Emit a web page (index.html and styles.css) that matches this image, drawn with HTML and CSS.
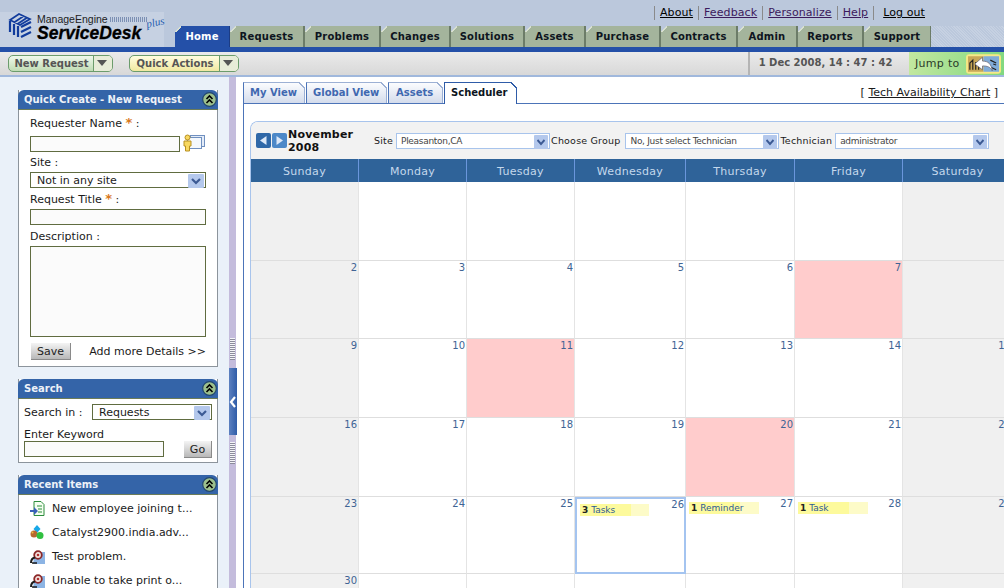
FILE: index.html
```html
<!DOCTYPE html>
<html lang="en">
<head>
<meta charset="utf-8">
<title>ServiceDesk Plus</title>
<link rel="stylesheet" href="styles.css">
</head>
<body>
<svg class="defs" width="0" height="0" aria-hidden="true">
  <defs>
    <symbol id="collapse" viewBox="0 0 15 15">
      <circle cx="7.5" cy="7.5" r="6.8" fill="#9cc08c" stroke="#24486c" stroke-width="1.2"/>
      <path d="M4.5 7l3-3 3 3M4.5 11l3-3 3 3" fill="none" stroke="#000" stroke-width="1.6"/>
    </symbol>
    <symbol id="chev" viewBox="0 0 16 14" preserveAspectRatio="none">
      <rect width="16" height="14" rx="1" fill="#b4c8ec"/>
      <path d="M4 5l4 4 4-4" fill="none" stroke="#3c5a94" stroke-width="2.2"/>
    </symbol>
    <symbol id="problem" viewBox="0 0 15 15">
      <path d="M5 3h10v12H3z" fill="#8cb4e4"/>
      <circle cx="8" cy="6" r="3.8" fill="#f4e4e0" stroke="#8c2828" stroke-width="1.800"/>
      <circle cx="8" cy="6" r="1.300" fill="#b03030"/>
      <path d="M1 14c0-3 1.500-5 4-5.500" fill="none" stroke="#1c1c1c" stroke-width="2"/>
      <path d="M2 14h5" stroke="#1c1c1c" stroke-width="1.500"/>
    </symbol>
  </defs>
</svg>

<header class="header">
  <div class="logo-slot">
    <div class="logo">
      <svg class="logo-mark" width="24" height="26" viewBox="0 0 24 26">
        <path d="M2 7l9-6 11 5-10 6zM6 9.500l9-6M9.500 11l9-6" fill="none" stroke="#123c9c" stroke-width="1.700"/>
        <path d="M2 8v11M6 11v11M10 13v11" fill="none" stroke="#123c9c" stroke-width="2.200"/>
        <path d="M13 14l10-5M13 19l10-5M13 24l10-5" fill="none" stroke="#123c9c" stroke-width="2.200"/>
      </svg>
      <div class="logo-words">
        <div class="logo-top">ManageEngine<span class="logo-dots"></span></div>
        <div class="logo-main">ServiceDesk</div>
      </div>
      <span class="logo-plus">plus</span>
    </div>
  </div>
  <div class="head-right">
    <div class="toplinks">
      <a href="#">About</a><a class="seen" href="#">Feedback</a><a class="seen" href="#">Personalize</a><a class="seen" href="#">Help</a><a class="last" href="#">Log out</a>
    </div>
    <nav class="tabs">
      <a class="tab active" href="#">Home</a>
      <a class="tab" href="#">Requests</a>
      <a class="tab" href="#">Problems</a>
      <a class="tab" href="#">Changes</a>
      <a class="tab" href="#">Solutions</a>
      <a class="tab" href="#">Assets</a>
      <a class="tab" href="#">Purchase</a>
      <a class="tab" href="#">Contracts</a>
      <a class="tab" href="#">Admin</a>
      <a class="tab" href="#">Reports</a>
      <a class="tab" href="#">Support</a>
    </nav>
  </div>
</header>

<div class="toolbar">
  <div class="tool-buttons">
    <div class="tool new"><span class="tool-label">New Request</span><span class="tool-arrow"></span></div>
    <div class="tool quick"><span class="tool-label">Quick Actions</span><span class="tool-arrow"></span></div>
  </div>
  <div class="clock">1 Dec 2008, 14 : 47 : 42</div>
  <div class="jump">
    <span>Jump to</span>
    <svg class="jump-icon" width="36" height="20" viewBox="0 0 36 20">
      <rect x=".5" y=".5" width="35" height="19" rx="2" fill="#f8e88c" stroke="#f4e880"/>
      <rect x="2" y="2" width="16" height="16" fill="#c8a858"/>
      <rect x="18" y="2" width="16" height="16" fill="#80acd8"/>
      <path d="M4 16V9l3-3v10M10 16V8M13 16v-5M25 6l6 3M28 10l3 1M25 13l6 3" stroke="#222" stroke-width="1.200" fill="none"/>
      <path d="M9 10l8-7v4c6 0 9 3 10 10-2-4-5-5-10-5v4z" fill="#fff" stroke="#667" stroke-width=".8"/>
    </svg>
  </div>
</div>

<div class="main">
  <aside class="sidebar">
    <section class="panel create">
      <h2 class="panel-head">Quick Create - New Request<svg class="collapse"><use href="#collapse"/></svg></h2>
      <div class="create-body">
        <label class="field-label">Requester Name <b class="req">*</b> :</label>
        <div class="requester-row">
          <input class="text short" type="text">
          <svg class="person" width="22" height="18" viewBox="0 0 22 18">
            <rect x="7.500" y="1.500" width="14" height="11" fill="#e4ecf8" stroke="#7090c0"/>
            <rect x="4.500" y="3.500" width="14" height="11" fill="#f4f8fc" stroke="#7090c0"/>
            <circle cx="4.500" cy="3.500" r="2.500" fill="#f8d860" stroke="#b89020"/>
            <path d="M1 7h7v5H6.500v5h-4v-5H1z" fill="#f8d860" stroke="#b89020"/>
          </svg>
        </div>
        <label class="field-label site-field">Site :</label>
        <div class="select wide">Not in any site<svg class="chev"><use href="#chev"/></svg></div>
        <label class="field-label title-field">Request Title <b class="req">*</b> :</label>
        <input class="text wide" type="text">
        <label class="field-label desc-field">Description :</label>
        <textarea class="area"></textarea>
        <div class="form-foot">
          <button class="btn save" type="button">Save</button>
          <a class="more" href="#">Add more Details &gt;&gt;</a>
        </div>
      </div>
    </section>

    <section class="panel search">
      <h2 class="panel-head">Search<svg class="collapse"><use href="#collapse"/></svg></h2>
      <div class="search-body">
        <div class="search-row">
          <span>Search in :</span>
          <div class="select scope">Requests<svg class="chev"><use href="#chev"/></svg></div>
        </div>
        <label class="kw-label">Enter Keyword</label>
        <div class="kw-row">
          <input class="text kw" type="text">
          <button class="btn go" type="button">Go</button>
        </div>
      </div>
    </section>

    <section class="panel recent">
      <h2 class="panel-head">Recent Items<svg class="collapse"><use href="#collapse"/></svg></h2>
      <ul class="recent-list">
        <li>
          <svg class="ri" viewBox="0 0 15 15"><path d="M4 .5h7l3 3v11H4z" fill="#f4fff0" stroke="#2c8c3c"/><path d="M7 5h5M8 8h4M8 11h4" stroke="#2c8c3c"/><path d="M0 9h4V6l4 4-4 4v-3H0z" fill="#3860b8"/></svg>
          New employee joining t...
        </li>
        <li>
          <svg class="ri" viewBox="0 0 15 15"><path d="M7 0l3.500 4L7 8 3.500 4z" fill="#18a8e8"/><circle cx="4" cy="9" r="3.500" fill="#b86830"/><circle cx="2.500" cy="7.500" r="1" fill="#e8c040"/><circle cx="10" cy="10.500" r="3.500" fill="#30c040"/></svg>
          Catalyst2900.india.adv...
        </li>
        <li><svg class="ri"><use href="#problem"/></svg>Test problem.</li>
        <li><svg class="ri"><use href="#problem"/></svg>Unable to take print o...</li>
      </ul>
    </section>
  </aside>

  <div class="splitter">
    <div class="grip top-grip"></div>
    <div class="handle"><svg width="8" height="14" viewBox="0 0 8 14"><path d="M6 2L2 7l4 5" fill="none" stroke="#fff" stroke-width="2.200"/></svg></div>
    <div class="grip"></div>
  </div>

  <main class="content">
    <div class="subtabs-row">
      <div class="subtabs">
        <a class="subtab" href="#">My View</a>
        <a class="subtab" href="#">Global View</a>
        <a class="subtab" href="#">Assets</a>
        <a class="subtab current" href="#">Scheduler</a>
      </div>
      <div class="chart-link">[ <a href="#">Tech Availability Chart</a> ]</div>
    </div>
    <div class="frame">
      <div class="calendar">
        <div class="cal-bar">
          <div class="nav-arrows">
            <svg width="15" height="15" viewBox="0 0 15 15"><rect width="15" height="15" rx="2" fill="#2f68a8"/><path d="M10.500 3v9L4 7.500z" fill="#dce8f8"/></svg>
            <svg width="15" height="15" viewBox="0 0 15 15"><rect width="15" height="15" rx="2" fill="#4c88c8"/><path d="M4.500 3v9L11 7.500z" fill="#dce8f8"/></svg>
          </div>
          <div class="month">November<br>2008</div>
          <span class="bar-label site-label">Site</span>
          <div class="cal-select">Pleasanton,CA<svg class="chev"><use href="#chev"/></svg></div>
          <span class="bar-label group-label">Choose Group</span>
          <div class="cal-select">No, Just select Technician<svg class="chev"><use href="#chev"/></svg></div>
          <span class="bar-label">Technician</span>
          <div class="cal-select">administrator<svg class="chev"><use href="#chev"/></svg></div>
        </div>
        <div class="cal-grid">
          <div class="dow">Sunday</div><div class="dow">Monday</div><div class="dow">Tuesday</div><div class="dow">Wednesday</div><div class="dow">Thursday</div><div class="dow">Friday</div><div class="dow">Saturday</div>

          <div class="day off"></div><div class="day"></div><div class="day"></div><div class="day"></div><div class="day"></div><div class="day"></div><div class="day off"></div>

          <div class="day off">2</div><div class="day">3</div><div class="day">4</div><div class="day">5</div><div class="day">6</div><div class="day hot">7</div><div class="day off">8</div>

          <div class="day off">9</div><div class="day">10</div><div class="day hot">11</div><div class="day">12</div><div class="day">13</div><div class="day">14</div><div class="day off">15</div>

          <div class="day off">16</div><div class="day">17</div><div class="day">18</div><div class="day">19</div><div class="day hot">20</div><div class="day">21</div><div class="day off">22</div>

          <div class="day off">23</div><div class="day">24</div><div class="day">25</div>
          <div class="day today">26<div class="event"><b>3</b> Tasks</div></div>
          <div class="day">27<div class="event"><b>1</b> Reminder</div></div>
          <div class="day">28<div class="event"><b>1</b> Task</div></div>
          <div class="day off">29</div>

          <div class="day off">30</div><div class="day"></div><div class="day"></div><div class="day"></div><div class="day"></div><div class="day"></div><div class="day off"></div>
        </div>
      </div>
    </div>
  </main>
</div>
</body>
</html>
```
FILE: styles.css
```css
* { box-sizing: border-box; }
html, body { margin: 0; padding: 0; height: 588px; overflow: hidden; }
body { font: 11px/13px "DejaVu Sans", Verdana, sans-serif; color: #1a1a1a; background: #fff; }
a { color: inherit; }
.defs { position: absolute; }

/* header */
.header { display: flex; height: 47px; background: #bbc8dc; }
.logo-slot { width: 175px; flex: none; display: flex; align-items: flex-end; }
.logo { display: flex; width: 164px; height: 35px; padding: 1px 0 0 8px; background: #c6d1e2; position: relative; }
.logo-mark { flex: none; margin-right: 5px; }
.logo-words { display: flex; flex-direction: column; }
.logo-top { display: flex; align-items: center; font: 10.500px/13px "Liberation Sans", sans-serif; color: #222; }
.logo-dots { width: 37px; height: 5px; margin-left: 2px; background: repeating-linear-gradient(90deg, #7c90b4 0 1px, transparent 1px 2px); }
.logo-main { font: italic bold 17.500px/15px "Liberation Sans", sans-serif; color: #000; -webkit-text-stroke: .3px #000; }
.logo-plus { position: absolute; left: 146px; top: 4px; font: italic 11px/12px "Liberation Serif", serif; color: #2860b0; transform: rotate(-12deg); }

.head-right { flex: 1; display: flex; flex-direction: column; background: #bbc8dc; }
.toplinks { height: 26px; display: flex; align-items: flex-start; padding: 6px 0 0 479px; color: #000; letter-spacing: .1px; }
.toplinks a { padding: 0 5px; border-left: 1px solid #8a8a8a; height: 14px; text-decoration: underline; }
.toplinks a.seen { color: #3c1a5c; }
.toplinks a.last { padding-left: 9px; color: #000; border-left-color: #8a8a8a; }

.tabs { display: grid; height: 21px; grid-template-columns: 55px 75px 76px 70px 74px 61px 75px 77px 60px 66px 67px; background: repeating-linear-gradient(45deg, #bbc8dc 0 1px, #c6d1e2 1px 2px) 755px 0 no-repeat; }
.tab { position: relative; display: block; text-align: center; font-size: 10px; letter-spacing: .2px; font-weight: bold; line-height: 20px; padding-top: 1px; text-decoration: none; color: #0e1420; background: #a4b49c; border-right: 2px solid #6c7c68; }
.tab::before { content: ""; position: absolute; left: 0; top: 0; width: 6px; height: 6px; background: linear-gradient(135deg, #bbc8dc 48%, #d8e0d0 48%, #d8e0d0 62%, transparent 62%); }
.tab.active { background: #2450a8; color: #fff; border-right: 1px solid #1c3c84; }
.tab:last-child { border-right-width: 1px; }

/* toolbar */
.toolbar { display: flex; height: 30px; border-top: 5px solid #2450a8; border-bottom: 2px solid #a0b8dc; background: linear-gradient(#eaeaea, #d8d8d8); }
.tool-buttons { width: 748px; flex: none; display: flex; gap: 16px; padding: 3px 0 0 8px; }
.tool { display: flex; height: 17px; border: 1px solid #6c9c6c; border-radius: 5px; font-size: 10px; font-weight: bold; color: #555; line-height: 16px; }
.tool.new { width: 105px; background: linear-gradient(#f0f8ec, #c0dcb4); }
.tool.quick { width: 110px; background: linear-gradient(#fffde0, #f0e8a0); }
.tool-label { flex: 1; text-align: center; padding-left: 1px; }
.tool-arrow { width: 19px; border-left: 1px solid #6c9c6c; position: relative; background: #e8ecd8; border-radius: 0 4px 4px 0; }
.tool-arrow::after { content: ""; position: absolute; left: 3px; top: 4px; border: 5px solid transparent; border-top: 6px solid #555; border-bottom: 0; }
.clock { width: 161px; flex: none; border-left: 2px solid #b4b4b4; font-size: 10px; font-weight: bold; color: #555; text-align: center; line-height: 20px; padding: 1px 8px 0 0; }
.jump { flex: 1; display: flex; align-items: center; justify-content: space-between; padding: 0 3px 0 6px; background: linear-gradient(100deg, #c4e8a0, #80d880); color: #2a3a2a; letter-spacing: .3px; }
.jump-icon { flex: none; width: 35px; }

/* layout */
.main { display: flex; height: 511px; overflow: hidden; }
.sidebar { width: 229px; flex: none; padding: 13px 11px 0 18px; background: #eaf1f9; }
.panel { background: #fff; border: 1px solid #8c949c; border-top: 0; }
.panel-head { position: relative; height: 20px; margin: 0 -1px; padding-left: 6px; font-size: 10px; line-height: 19px; font-weight: bold; color: #eef2f8; background: #3464a8; border-radius: 6px 6px 0 0; border-bottom: 1px solid #6c7c58; }
.collapse { position: absolute; right: 1px; top: 2px; width: 15px; height: 15px; }
.chev { position: absolute; right: 1px; top: 1px; width: 16px; height: 14px; }
.create { height: 277px; }
.create-body { padding: 6px 11px 0; color: #1a1a1a; }
.field-label { display: block; height: 15px; line-height: 13px; }
.site-field { line-height: 11px; }
.title-field { height: 17px; }
.desc-field { height: 16px; }
.req { color: #d87820; font-size: 13px; }
.requester-row { display: flex; gap: 3px; height: 17px; margin: 5px 0 4px; }
.person { flex: none; margin-top: -2px; }
.text { display: block; height: 16px; padding: 0; border: 1px solid #606c40; background: #fbfbfb; }
.short { width: 150px; }
.wide { width: 176px; }
.area { display: block; width: 176px; height: 91px; padding: 0; border: 1px solid #606c40; background: #fbfbfb; resize: none; }
.select { position: relative; height: 16px; padding-left: 6px; line-height: 15px; border: 1px solid #606c40; background: #fff; }
.create-body .select { margin-bottom: 4px; }
.create-body .text.wide { margin-bottom: 5px; }
.form-foot { display: flex; align-items: center; justify-content: space-between; margin-top: 6px; padding-left: 1px; }
.btn { height: 17px; padding: 0; font: 11px/13px "DejaVu Sans", sans-serif; color: #222; border: 0; border-right: 1px solid #8a8a8a; border-bottom: 1px solid #8a8a8a; background: linear-gradient(#f4f4f4, #b8b8b8); }
.save { width: 40px; }
.more { text-decoration: none; }
.search { margin-top: 12px; height: 84px; }
.search-body { padding: 5px 5px 0 5px; }
.search-row { display: flex; align-items: center; justify-content: space-between; height: 16px; }
.scope { width: 120px; }
.kw-label { display: block; margin-top: 8px; height: 13px; line-height: 14px; }
.kw-row { display: flex; justify-content: space-between; }
.kw { width: 140px; }
.go { width: 28px; }
.recent { margin-top: 12px; height: 140px; }
.recent-list { list-style: none; margin: 0; padding: 1px 0 0 11px; }
.recent-list li { display: flex; align-items: center; gap: 7px; height: 24px; }
.ri { width: 15px; height: 15px; flex: none; }

/* splitter */
.splitter { width: 7px; flex: none; background: #c4bcdc; display: flex; flex-direction: column; align-items: center; }
.grip { width: 5px; height: 22px; margin-top: 7px; background: repeating-linear-gradient(#f4f4f8 0 1px, #8c8c9c 1px 2px); }
.top-grip { margin-top: 261px; }
.handle { width: 8px; margin: 8px -1px 0 0; height: 67px; flex: none; display: flex; align-items: center; justify-content: center; background: linear-gradient(90deg, #5c80c0, #2f5ca8); }

/* content */
.content { flex: 1; min-width: 0; padding-left: 7px; overflow: hidden; }
.subtabs-row { display: flex; justify-content: space-between; height: 26px; padding-top: 5px; }
.subtabs { display: grid; grid-template-columns: 62px 81px 55px 73px; gap: 1px; align-items: end; height: 21px; }
.subtab { position: relative; display: block; height: 21px; padding-left: 6px; font-size: 10px; font-weight: bold; line-height: 20px; color: #4068b0; text-decoration: none; background: linear-gradient(#fbfcfe, #d4dcec); border: 1px solid #9cb0d4; border-bottom: 0; border-left-color: #4c74b8; }
.subtab::after { content: ""; position: absolute; right: -1px; top: -1px; width: 7px; height: 7px; background: linear-gradient(45deg, transparent 44%, #9cb0d4 44%, #9cb0d4 60%, #fff 60%); }
.subtab:nth-child(3) { padding-left: 7px; }
.subtab.current { color: #0c1420; background: #fff; border-color: #2f5ca8; height: 22px; margin-bottom: -1px; z-index: 1; }
.subtab.current::after { background: linear-gradient(45deg, transparent 44%, #2f5ca8 44%, #2f5ca8 60%, #fff 60%); }
.chart-link { padding: 4px 6px 0 0; }
.frame { height: 485px; padding: 17px 0 0 7px; border-top: 1px solid #4c74b8; border-left: 1px solid #4c74b8; overflow: hidden; }
.calendar { width: 763px; border-top: 1px solid #a8c4ec; border-left: 1px solid #a8c4ec; border-radius: 8px 0 0 0; overflow: hidden; margin-left: -1px; }
.cal-bar { display: flex; align-items: center; height: 37px; padding-left: 5px; background: #f2f2f2; font-size: 9.500px; color: #1a1a1a; letter-spacing: .2px; overflow: hidden; }
.nav-arrows { display: flex; gap: 1px; flex: none; }
.month { width: 87px; flex: none; font-size: 11px; font-weight: bold; line-height: 13px; padding: 1px 0 0 1px; color: #111; }
.site-label { padding-right: 3px; }
.bar-label { flex: none; }
.cal-select { position: relative; flex: none; width: 154px; height: 16px; padding-left: 4px; margin-right: 1px; font-size: 9px; line-height: 15px; letter-spacing: -.3px; color: #444; background: #fff; border: 1px solid #a8c4ec; }
.cal-select .chev { width: 14px; }
.bar-label + .cal-select { margin-left: 3px; }
.site-label + .cal-select { margin-left: 0; }
.group-label + .cal-select { margin-left: 5px; }
.cal-grid { display: grid; grid-template-columns: 108px 108px 108px 111px 109px 108px 110px; grid-template-rows: 23px 79px 78px 79px 79px 77px 40px; }
.dow { background: #2f6399; border-right: 1px solid #6a96dc; color: #c4d8ec; text-align: center; font-size: 11px; padding-top: 1px; line-height: 23px; letter-spacing: .3px; }
.day { position: relative; padding: 1px 1px 0 0; text-align: right; font-size: 10px; line-height: 12px; color: #406494; background: #fff; border-right: 1px solid #e4e4e4; border-bottom: 1px solid #dedede; }
.off { background: #f0f0f0; }
.hot { background: #ffcccc; }
.today { border: 2px solid #a4c4f0; padding: 0; }
.event { position: absolute; left: 3px; top: 5px; width: 70px; height: 12px; padding-left: 2px; text-align: left; font-size: 9px; line-height: 12px; color: #2f5c94; background: linear-gradient(90deg, #fdfa9c 0 51px, #fdfbc8 51px 70px); }
.today .event { left: 3px; width: 69px; }
.event b { color: #222; }
```
